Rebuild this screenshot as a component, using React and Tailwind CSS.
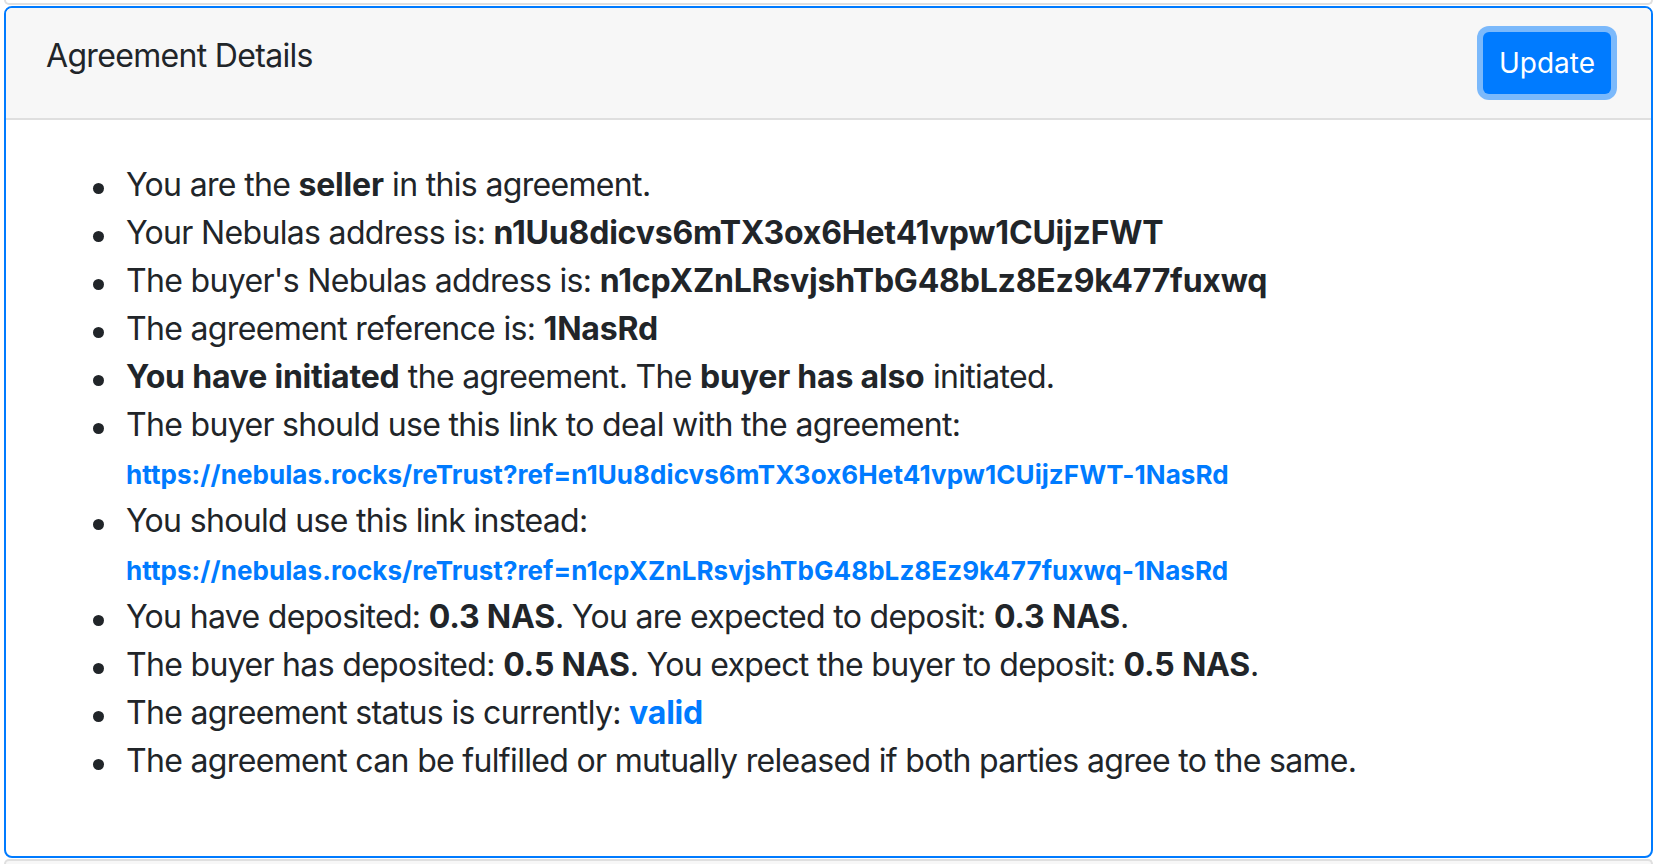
import React from 'react'

const font = { fontFamily: 'Inter, "Noto Sans", sans-serif' }

function Row({ children }) {
  return (
    <li className="flex">
      <span className="w-[80px] shrink-0 pl-[47px] pt-[22px]">
        <span className="block w-[11px] h-[11px] rounded-full bg-[#212529]" />
      </span>
      <div>{children}</div>
    </li>
  )
}

function Link({ children }) {
  return (
    <a href="#" className="text-[26px] leading-none font-bold tracking-[0.07px] text-[#007bff] no-underline">{children}</a>
  )
}

function B({ children, className = '' }) {
  return <b className={`font-bold tracking-[-0.2px] ${className}`}>{children}</b>
}

export default function App() {
  return (
    <div className="h-screen overflow-hidden bg-white text-[#212529]" style={font}>
      {/* tail of the card above */}
      <div className="ml-[4px] w-[1649px] h-[5px] border-x-2 border-b-2 border-[#dfdfdf] rounded-b-[8px]" />

      <div className="ml-[4px] mt-[1px] w-[1649px] border-2 border-[#007bff] rounded-[8px] bg-white overflow-hidden">
        <div className="flex justify-between items-start bg-[#f7f7f7] border-b-2 border-[#dfdfdf] px-[40px] py-[24px]">
          <div className="text-[32px] leading-[48px] tracking-[-0.68px]">Agreement Details</div>
          <button className="h-[62px] px-[16px] rounded-[6px] bg-[#007bff] text-white text-[28px] leading-[42px] shadow-[0_0_0_6px_rgba(0,123,255,0.5)]">
            Update
          </button>
        </div>

        <div className="px-[40px] pt-[41px] pb-[40px]">
          <ul className="list-none mb-[31px] text-[32px] leading-[48px] tracking-[-0.67px]">
            <Row>You are the <B>seller</B> in this agreement.</Row>
            <Row>Your Nebulas address is: <B>n1Uu8dicvs6mTX3ox6Het41vpw1CUijzFWT</B></Row>
            <Row>The buyer's Nebulas address is: <B>n1cpXZnLRsvjshTbG48bLz8Ez9k477fuxwq</B></Row>
            <Row>The agreement reference is: <B>1NasRd</B></Row>
            <Row><B>You have initiated</B> the agreement. The <B>buyer has also</B> initiated.</Row>
            <Row>
              The buyer should use this link to deal with the agreement:<br />
              <Link>https://nebulas.rocks/reTrust?ref=n1Uu8dicvs6mTX3ox6Het41vpw1CUijzFWT-1NasRd</Link>
            </Row>
            <Row>
              You should use this link instead:<br />
              <Link>https://nebulas.rocks/reTrust?ref=n1cpXZnLRsvjshTbG48bLz8Ez9k477fuxwq-1NasRd</Link>
            </Row>
            <Row>You have deposited: <B>0.3 NAS</B>. You are expected to deposit: <B>0.3 NAS</B>.</Row>
            <Row>The buyer has deposited: <B>0.5 NAS</B>. You expect the buyer to deposit: <B>0.5 NAS</B>.</Row>
            <Row>The agreement status is currently: <B className="text-[#007bff]">valid</B></Row>
            <Row>The agreement can be fulfilled or mutually released if both parties agree to the same.</Row>
          </ul>
        </div>
      </div>

      <div className="ml-[4px] mt-[1px] w-[1649px] h-[5px] border-x-2 border-t-2 border-[#dfdfdf] rounded-t-[8px] bg-[#f7f7f7]" />
    </div>
  )
}
